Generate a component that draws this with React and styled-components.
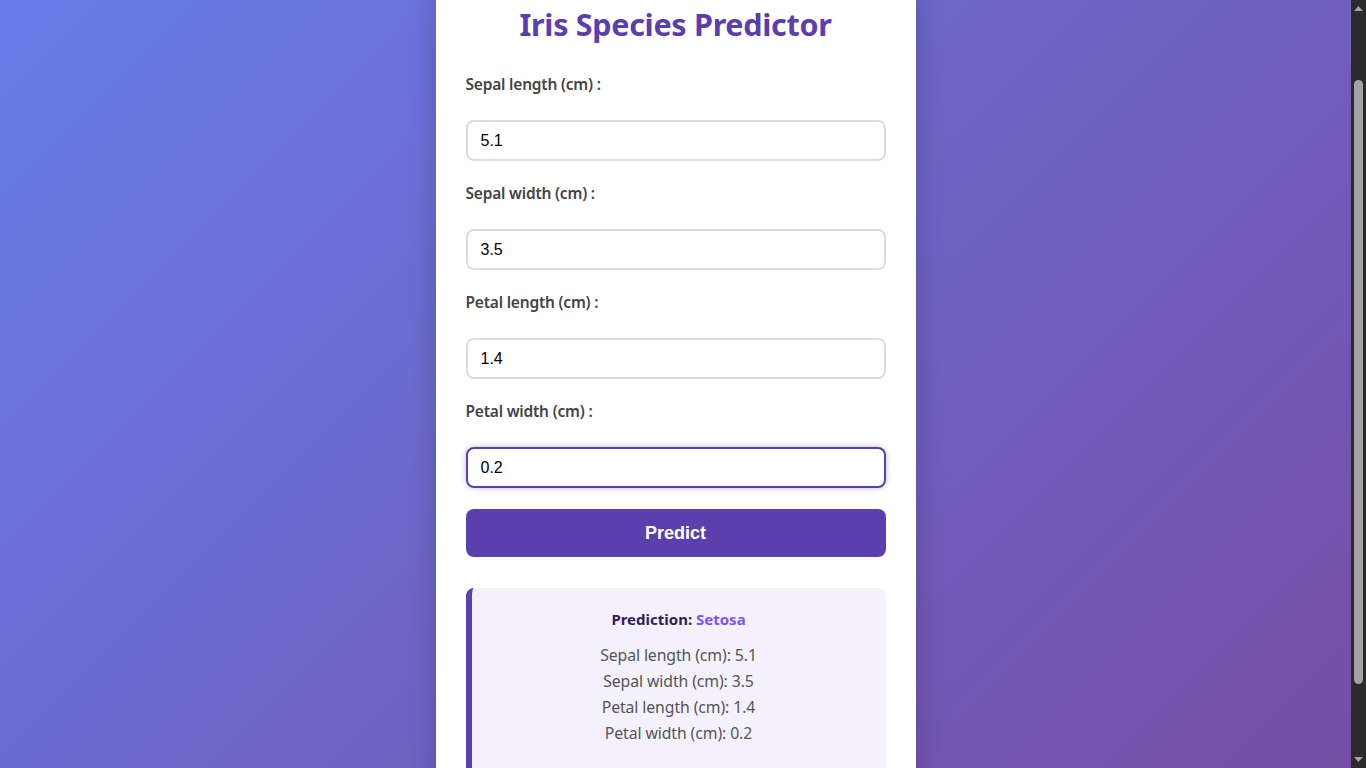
import React from 'react'
import styled, { createGlobalStyle } from 'styled-components'

const GlobalStyle = createGlobalStyle`
  html, body {
    margin: 0;
    padding: 0;
  }
  body {
    min-height: 100vh;
    background: linear-gradient(135deg, #667eea 0%, #764ba2 100%);
    font-family: "Noto Sans", "Open Sans", sans-serif;
  }
`

const fields = [
  { id: 'sepal_length', label: 'Sepal length (cm) :', short: 'Sepal length (cm)', value: '5.1' },
  { id: 'sepal_width', label: 'Sepal width (cm) :', short: 'Sepal width (cm)', value: '3.5' },
  { id: 'petal_length', label: 'Petal length (cm) :', short: 'Petal length (cm)', value: '1.4' },
  { id: 'petal_width', label: 'Petal width (cm) :', short: 'Petal width (cm)', value: '0.2' },
]

export default function App() {
  const [values, setValues] = React.useState(
    Object.fromEntries(fields.map((f) => [f.id, f.value]))
  )

  React.useLayoutEffect(() => {
    window.scrollTo(0, 65)
  }, [])

  return (
    <Page>
      <GlobalStyle />
      <Card>
        <Title>Iris Species Predictor</Title>
        <form onSubmit={(e) => e.preventDefault()}>
          {fields.map((f, i) => (
            <Group key={f.id}>
              <Label htmlFor={f.id}>{f.label}</Label>
              <Input
                id={f.id}
                $focused={i === fields.length - 1}
                value={values[f.id]}
                onChange={(e) => setValues({ ...values, [f.id]: e.target.value })}
              />
            </Group>
          ))}
          <Button type="submit">Predict</Button>
        </form>
        <Result>
          <Headline>
            Prediction: <Species>Setosa</Species>
          </Headline>
          {fields.map((f) => (
            <Line key={f.id}>
              {f.short}: {values[f.id]}
            </Line>
          ))}
        </Result>
      </Card>
      <ScrollBar aria-hidden="true">
        <Arrow viewBox="0 0 9 5">
          <path d="M4.5 0 L9 5 L0 5 Z" fill="#a3a3a3" />
        </Arrow>
        <Track>
          <Thumb />
        </Track>
        <Arrow viewBox="0 0 9 5">
          <path d="M0 0 L9 0 L4.5 5 Z" fill="#a3a3a3" />
        </Arrow>
      </ScrollBar>
    </Page>
  )
}

const Page = styled.div`
  display: flex;
  justify-content: center;
  padding: 40px 15px 40px 0;
`

/* stand-in for the browser's classic scrollbar, which headless hides */
const ScrollBar = styled.div`
  position: fixed;
  top: 0;
  right: 0;
  width: 15px;
  height: 100vh;
  background: #2b2b2b;
  display: flex;
  flex-direction: column;
  align-items: center;
  justify-content: space-between;
  padding: 6px 0;
  box-sizing: border-box;
`

const Arrow = styled.svg`
  width: 9px;
  height: 5px;
  flex: none;
`

const Track = styled.div`
  flex: 1;
  width: 100%;
  display: flex;
  justify-content: center;
  padding: 69px 0 73px;
  box-sizing: border-box;
`

const Thumb = styled.div`
  width: 9px;
  background: #a3a3a3;
  border-radius: 5px;
`

const Card = styled.div`
  width: 480px;
  box-sizing: border-box;
  padding: 30px;
  background: #ffffff;
  border-radius: 12px;
  box-shadow: 0 10px 30px rgba(0, 0, 0, 0.2);
`

const Title = styled.h1`
  margin: 0 0 31px;
  text-align: center;
  font-size: 30.5px;
  line-height: 38px;
  font-weight: 700;
  color: #5a3eae;
  letter-spacing: -0.3px;
`

const Group = styled.div`
  margin-bottom: 22px;
`

const Label = styled.label`
  display: block;
  margin-bottom: 26px;
  font-size: 15.5px;
  line-height: 20px;
  font-weight: 600;
  color: #444444;
  letter-spacing: -0.2px;
`

const Input = styled.input`
  display: block;
  width: 100%;
  height: 41px;
  box-sizing: border-box;
  padding: 0 13px;
  border: 2px solid ${(p) => (p.$focused ? '#5b3fac' : '#dddddd')};
  border-radius: 8px;
  font-family: "Liberation Sans", Arial, sans-serif;
  font-size: 16px;
  color: #000000;
  outline: none;
  box-shadow: ${(p) => (p.$focused ? '0 0 6px rgba(91, 63, 172, 0.35)' : 'none')};
`

const Button = styled.button`
  display: block;
  width: 100%;
  height: 48px;
  margin-top: -1px;
  border: none;
  border-radius: 8px;
  background: #5b3fac;
  color: #ffffff;
  font-family: "Liberation Sans", Arial, sans-serif;
  font-size: 18px;
  font-weight: 700;
  cursor: pointer;
`

const Result = styled.div`
  margin-top: 31px;
  padding: 20px 20px 40px;
  background: #f4f1fd;
  border-left: 6px solid #5b3fac;
  border-radius: 8px;
  text-align: center;
`

const Headline = styled.p`
  margin: 0 0 12px;
  font-size: 15px;
  line-height: 22px;
  font-weight: 700;
  color: #2e1f5c;
`

const Species = styled.span`
  color: #7a55f0;
`

const Line = styled.p`
  margin: 0;
  font-size: 15.8px;
  line-height: 26px;
  color: #555555;
  letter-spacing: -0.1px;
`
